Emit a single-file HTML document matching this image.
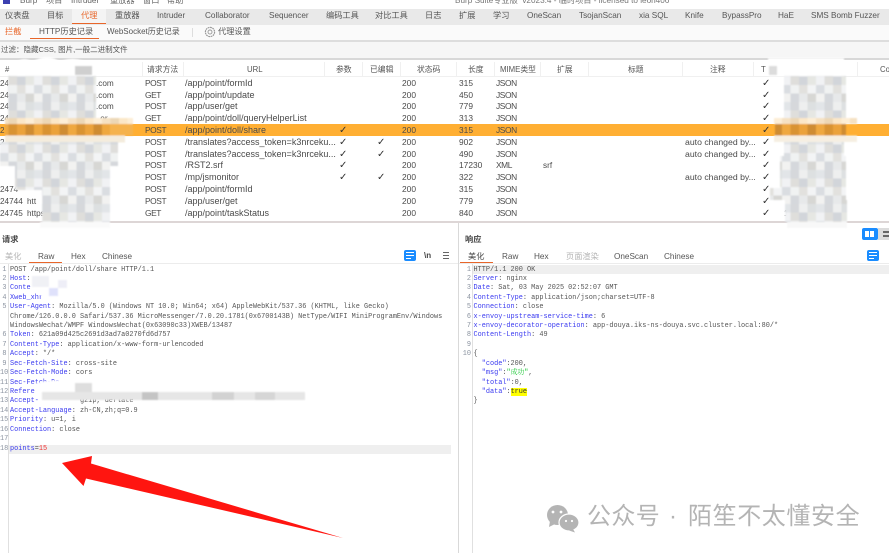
<!DOCTYPE html>
<html lang="zh-CN"><head><meta charset="utf-8"><title>Burp Suite</title>
<style>
html,body{margin:0;padding:0;background:#fff}
#s{position:relative;width:889px;height:553px;overflow:hidden;background:#fff}
#w{position:absolute;left:0;top:0;width:889px;height:553px;filter:blur(.32px);font:8px "Liberation Sans","Noto Sans CJK SC",sans-serif;color:#444}
#w div,#w span,#w b{position:absolute;white-space:pre}
.tb{top:10px;line-height:12px;font-size:8.2px;color:#555}
.st{top:26px;line-height:12px;font-size:8.2px;color:#555}
.h{top:63.5px;line-height:12px;font-size:7.8px;color:#555}
.r{left:0;width:889px;height:13px;line-height:13px;font-size:8.2px;color:#4a4a4a}
.m{left:145px;font-size:8.4px;letter-spacing:-.4px}.u{left:185px;font-size:9px}.s{left:402px;font-size:8.4px}.l{left:459px;font-size:8.4px}.t{left:496px;font-size:8.4px;letter-spacing:-.4px}.x{left:543px}.c{left:685px;font-size:8.7px}
.k{font:10px/13px "DejaVu Sans",sans-serif;color:#333}.p{left:339px}.e{left:377px}.v{left:762px}
.sep{top:62px;width:1px;height:14px;background:#f0f0f0}
.code{font:6.87px/9.42px "Liberation Mono","Noto Serif CJK SC",monospace;color:#555}
#w .code i{font-style:normal;color:#3b3bf0}
#w .code u{text-decoration:none;color:#f03030}
.ln{color:#8b93a0;text-align:right}
.pt{top:251px;line-height:12px;font-size:8.2px;color:#555}
.gr{color:#b5b5b5}
</style></head><body><div id="s"><div id="w">
<!-- title -->
<div style="left:3px;top:0;width:7px;height:4px;background:#3b3fb0"></div>
<div style="left:20px;top:-5px;line-height:12px;font-size:8.2px;color:#666">Burp</div>
<div style="left:46px;top:-5px;line-height:12px;font-size:8.2px;color:#666">项目</div>
<div style="left:71px;top:-5px;line-height:12px;font-size:8.2px;color:#666">Intruder</div>
<div style="left:110px;top:-5px;line-height:12px;font-size:8.2px;color:#666">重放器</div>
<div style="left:143px;top:-5px;line-height:12px;font-size:8.2px;color:#666">窗口</div>
<div style="left:167px;top:-5px;line-height:12px;font-size:8.2px;color:#666">帮助</div>
<div style="left:455px;top:-5px;line-height:12px;font-size:8.2px;color:#777">Burp Suite专业版  v2023.4 - 临时项目 - licensed to leon406</div>
<!-- tab bar -->
<div style="left:0;top:9px;width:889px;height:16px;background:#e9e9e9"></div>
<div style="left:72px;top:9px;width:34px;height:15px;background:#f4f4f4"></div>
<div style="left:72px;top:23px;width:34px;height:1.3px;background:#e8662a"></div>
<div class="tb" style="left:5px">仪表盘</div><div class="tb" style="left:47px">目标</div><div class="tb" style="left:81px;color:#e8662a">代理</div>
<div class="tb" style="left:115px">重放器</div><div class="tb" style="left:157px">Intruder</div><div class="tb" style="left:205px">Collaborator</div>
<div class="tb" style="left:269px">Sequencer</div><div class="tb" style="left:326px">编码工具</div><div class="tb" style="left:375px">对比工具</div>
<div class="tb" style="left:425px">日志</div><div class="tb" style="left:459px">扩展</div><div class="tb" style="left:493px">学习</div>
<div class="tb" style="left:527px">OneScan</div><div class="tb" style="left:579px">TsojanScan</div><div class="tb" style="left:639px">xia SQL</div>
<div class="tb" style="left:685px">Knife</div><div class="tb" style="left:722px">BypassPro</div><div class="tb" style="left:778px">HaE</div><div class="tb" style="left:811px">SMS Bomb Fuzzer</div>
<!-- sub tabs -->
<div style="left:0;top:25px;width:889px;height:15px;background:#fafafa"></div>
<div class="st" style="left:5px;color:#e8662a">拦截</div><div class="st" style="left:39px">HTTP历史记录</div><div class="st" style="left:107px;font-size:8px">WebSocket历史记录</div>
<div style="left:30px;top:38px;width:69px;height:1.3px;background:#e8662a"></div>
<div style="left:192px;top:28px;width:1px;height:9px;background:#ddd"></div>
<svg style="position:absolute;left:204px;top:26px" width="12" height="12" viewBox="0 0 12 12"><circle cx="6" cy="6" r="4.6" fill="none" stroke="#999" stroke-width="1.2" stroke-dasharray="1.8 .6"/><circle cx="6" cy="6" r="2" fill="none" stroke="#999" stroke-width=".9"/></svg>
<div class="st" style="left:218px">代理设置</div>
<!-- filter -->
<div style="left:0;top:40px;width:889px;height:2px;background:#ddd"></div>
<div style="left:0;top:42px;width:889px;height:16px;background:#f6f6f6"></div>
<div style="left:0;top:58px;width:889px;height:1.5px;background:#d8d8d8"></div>
<div style="left:1px;top:44px;line-height:12px;font-size:7.5px;color:#555">过滤：隐藏CSS, 图片,一般二进制文件</div>
<!-- header -->
<div style="left:0;top:76px;width:889px;height:1px;background:#f0f0f0"></div>
<div class="sep" style="left:142px"></div><div class="sep" style="left:183px"></div><div class="sep" style="left:324px"></div><div class="sep" style="left:362px"></div><div class="sep" style="left:400px"></div><div class="sep" style="left:456px"></div><div class="sep" style="left:494px"></div><div class="sep" style="left:540px"></div><div class="sep" style="left:588px"></div><div class="sep" style="left:682px"></div><div class="sep" style="left:753px"></div><div class="sep" style="left:857px"></div>
<div class="h" style="left:5px">#</div><div class="h" style="left:147px">请求方法</div><div class="h" style="left:247px">URL</div><div class="h" style="left:336px">参数</div><div class="h" style="left:370px">已编辑</div><div class="h" style="left:417px">状态码</div><div class="h" style="left:468px">长度</div><div class="h" style="left:500px">MIME类型</div><div class="h" style="left:557px">扩展</div><div class="h" style="left:628px">标题</div><div class="h" style="left:710px">注释</div><div class="h" style="left:761px">T</div><div class="h" style="left:880px">Co</div>
<!-- rows -->
<div class="r" style="top:77px"><span style="left:0">247</span><span style="left:96px">.com</span><span class="m">POST</span><span class="u">/app/point/formId</span><span class="s">200</span><span class="l">315</span><span class="t">JSON</span><span class="k v">✓</span></div>
<div class="r" style="top:88.5px"><span style="left:0">24</span><span style="left:96px">.com</span><span class="m">GET</span><span class="u">/app/point/update</span><span class="s">200</span><span class="l">450</span><span class="t">JSON</span><span class="k v">✓</span></div>
<div class="r" style="top:100.3px"><span style="left:0">24</span><span style="left:96px">.com</span><span class="m">POST</span><span class="u">/app/user/get</span><span class="s">200</span><span class="l">779</span><span class="t">JSON</span><span class="k v">✓</span></div>
<div class="r" style="top:112.1px"><span style="left:0">24</span><span style="left:98px">.or</span><span class="m">GET</span><span class="u">/app/point/doll/queryHelperList</span><span class="s">200</span><span class="l">313</span><span class="t">JSON</span><span class="k v">✓</span></div>
<div style="left:0;top:124px;width:889px;height:11.5px;background:#ffaf33"></div>
<div class="r" style="top:123.9px"><span style="left:0">2</span><span class="m">POST</span><span class="u">/app/point/doll/share</span><span class="k p">✓</span><span class="s">200</span><span class="l">315</span><span class="t">JSON</span><span class="k v">✓</span></div>
<div class="r" style="top:135.7px"><span style="left:0">2</span><span class="m">POST</span><span class="u">/translates?access_token=k3nrceku...</span><span class="k p">✓</span><span class="k e">✓</span><span class="s">200</span><span class="l">902</span><span class="t">JSON</span><span class="c">auto changed by...</span><span class="k v">✓</span></div>
<div class="r" style="top:147.5px"><span class="m">POST</span><span class="u">/translates?access_token=k3nrceku...</span><span class="k p">✓</span><span class="k e">✓</span><span class="s">200</span><span class="l">490</span><span class="t">JSON</span><span class="c">auto changed by...</span><span class="k v">✓</span></div>
<div class="r" style="top:159.3px"><span class="m">POST</span><span class="u">/RST2.srf</span><span class="k p">✓</span><span class="s">200</span><span class="l">17230</span><span class="t">XML</span><span class="x">srf</span><span class="k v">✓</span></div>
<div class="r" style="top:171.1px"><span class="m">POST</span><span class="u">/mp/jsmonitor</span><span class="k p">✓</span><span class="k e">✓</span><span class="s">200</span><span class="l">322</span><span class="t">JSON</span><span class="c">auto changed by...</span><span class="k v">✓</span></div>
<div class="r" style="top:182.9px"><span style="left:0">2474</span><span class="m">POST</span><span class="u">/app/point/formId</span><span class="s">200</span><span class="l">315</span><span class="t">JSON</span><span class="k v">✓</span></div>
<div class="r" style="top:194.7px"><span style="left:0">24744</span><span style="left:27px">htt</span><span class="m">POST</span><span class="u">/app/user/get</span><span class="s">200</span><span class="l">779</span><span class="t">JSON</span><span class="k v">✓</span></div>
<div class="r" style="top:206.5px"><span style="left:0">24745</span><span style="left:27px">https</span><span class="m">GET</span><span class="u">/app/point/taskStatus</span><span class="s">200</span><span class="l">840</span><span class="t">JSON</span><span class="k v">✓</span><span style="left:784px">1</span></div>
<div style="left:0;top:221px;width:889px;height:2px;background:#ddd6d6"></div>
<!-- mosaics -->
<svg style="position:absolute;left:0;top:0" width="889" height="553">
<defs>
<pattern id="g" width="34" height="34" patternUnits="userSpaceOnUse"><rect width="34" height="34" fill="#e9ebed"/><rect width="8.5" height="8.5" fill="#e2e5e8"/><rect x="8.5" width="8.5" height="8.5" fill="#d6d8db"/><rect x="17" width="8.5" height="8.5" fill="#eeefef"/><rect x="25.5" width="8.5" height="8.5" fill="#dde0e1"/><rect y="8.5" width="8.5" height="8.5" fill="#f1f2f4"/><rect x="8.5" y="8.5" width="8.5" height="8.5" fill="#dfdedb"/><rect x="17" y="8.5" width="8.5" height="8.5" fill="#d2d5da"/><rect x="25.5" y="8.5" width="8.5" height="8.5" fill="#e6e7e3"/><rect y="17" width="8.5" height="8.5" fill="#dadde1"/><rect x="8.5" y="17" width="8.5" height="8.5" fill="#f0f2f2"/><rect x="17" y="17" width="8.5" height="8.5" fill="#e2e1de"/><rect x="25.5" y="17" width="8.5" height="8.5" fill="#f3f4f5"/><rect y="25.5" width="8.5" height="8.5" fill="#f2f2f1"/><rect x="8.5" y="25.5" width="8.5" height="8.5" fill="#d5d8dc"/><rect x="17" y="25.5" width="8.5" height="8.5" fill="#e7e9ea"/><rect x="25.5" y="25.5" width="8.5" height="8.5" fill="#d7d7d4"/></pattern>
<pattern id="o" width="34" height="12" patternUnits="userSpaceOnUse"><rect width="34" height="12" fill="#e8a03c"/><rect width="8.5" height="12" fill="#efa83f"/><rect x="8.5" width="8.5" height="12" fill="#d99332"/><rect x="17" width="8.5" height="12" fill="#eba23a"/><rect x="25.5" width="8.5" height="12" fill="#cf8c30"/></pattern>
<pattern id="p" width="34" height="7" patternUnits="userSpaceOnUse"><rect width="34" height="7" fill="#fbe7c8"/><rect width="8.5" height="7" fill="#f5e1c3"/><rect x="8.5" width="8.5" height="7" fill="#ecd7b6"/><rect x="25.5" width="8.5" height="7" fill="#fdeed6"/></pattern>
<filter id="b" x="-5%" y="-5%" width="110%" height="110%"><feGaussianBlur stdDeviation=".8"/></filter>
</defs>
<g filter="url(#b)">
<path d="M10 68Q22 54 32 62Q48 52 60 62Q76 54 92 66V76H92V118H8V76H10Z" fill="#fff"/>
<rect x="16" y="68" width="60" height="8" fill="#fff"/><rect x="75" y="66" width="17" height="9" fill="#cfcfcf"/>
<rect x="8" y="76" width="88" height="42" fill="url(#g)"/>
<rect x="5" y="118" width="128" height="6" fill="url(#p)"/>
<rect x="5" y="124" width="105" height="11.5" fill="url(#o)"/><rect x="110" y="124" width="23" height="11.5" fill="#f5b24e"/>
<rect x="5" y="135.5" width="120" height="7" fill="#f4ecdd"/>
<rect x="0" y="142" width="118" height="24" fill="url(#g)"/>
<rect x="15" y="166" width="95" height="24" fill="url(#g)"/>
<rect x="42" y="190" width="68" height="32" fill="url(#g)"/>
<rect x="40" y="222" width="70" height="6" fill="#fafafa"/>
<rect x="768" y="58" width="76" height="18" fill="#fff"/><rect x="769" y="66" width="8" height="9" fill="#dcdcdc"/>
<rect x="784" y="76" width="62" height="42" fill="url(#g)"/>
<rect x="774" y="118" width="83" height="6" fill="url(#p)"/>
<rect x="775" y="124" width="71" height="11.5" fill="url(#o)"/>
<rect x="774" y="135.5" width="83" height="6.5" fill="#f6efe2"/>
<rect x="784" y="142" width="60" height="14" fill="url(#g)"/>
<rect x="780" y="156" width="66" height="32" fill="url(#g)"/>
<rect x="770" y="188" width="76" height="12" fill="url(#g)"/>
<rect x="785" y="200" width="62" height="22" fill="url(#g)"/>
<rect x="787" y="222" width="60" height="6" fill="#f8f8f8"/>
</g></svg>
<!-- panes -->
<div style="left:458px;top:223px;width:1px;height:330px;background:#d9d9d9"></div>
<div style="left:2px;top:234px;line-height:12px;font-size:8.2px;font-weight:bold;color:#444">请求</div>
<div style="left:465px;top:234px;line-height:12px;font-size:8.2px;font-weight:bold;color:#444">响应</div>
<div style="left:862px;top:228px;width:16px;height:12px;border-radius:2px;background:#1a8cff"></div>
<div style="left:865px;top:231px;width:4px;height:6px;background:#fff"></div><div style="left:870px;top:231px;width:4px;height:6px;background:#fff"></div>
<div style="left:878px;top:228px;width:11px;height:12px;background:#dcdcdc"></div>
<div style="left:883px;top:231px;width:6px;height:2px;background:#666"></div><div style="left:883px;top:235px;width:6px;height:2px;background:#666"></div>
<div class="pt gr" style="left:5px">美化</div><div class="pt" style="left:38px">Raw</div><div class="pt" style="left:71px">Hex</div><div class="pt" style="left:102px">Chinese</div>
<div style="left:29px;top:262px;width:33px;height:1.3px;background:#e8662a"></div>
<div style="left:404px;top:250px;width:12px;height:11px;border-radius:2px;background:#1a8cff"></div>
<div style="left:406px;top:252px;width:8px;height:1px;background:#fff"></div><div style="left:406px;top:255px;width:8px;height:1px;background:#fff"></div><div style="left:406px;top:258px;width:5px;height:1px;background:#fff"></div>
<div style="left:424px;top:250px;line-height:12px;font-size:8px;font-weight:bold;color:#444">\n</div>
<div style="left:443px;top:252px;width:6px;height:1px;background:#666"></div><div style="left:443px;top:255px;width:6px;height:1px;background:#666"></div><div style="left:443px;top:258px;width:6px;height:1px;background:#666"></div>
<div class="pt" style="left:468px;color:#444">美化</div><div class="pt" style="left:502px">Raw</div><div class="pt" style="left:534px">Hex</div><div class="pt gr" style="left:566px">页面渲染</div><div class="pt" style="left:614px">OneScan</div><div class="pt" style="left:664px">Chinese</div>
<div style="left:460px;top:262px;width:33px;height:1.3px;background:#e8662a"></div>
<div style="left:867px;top:250px;width:12px;height:11px;border-radius:2px;background:#1a8cff"></div>
<div style="left:869px;top:252px;width:8px;height:1px;background:#fff"></div><div style="left:869px;top:255px;width:8px;height:1px;background:#fff"></div><div style="left:869px;top:258px;width:5px;height:1px;background:#fff"></div>
<div style="left:0;top:263px;width:458px;height:1px;background:#ececec"></div>
<div style="left:459px;top:263px;width:430px;height:1px;background:#ececec"></div>
<div style="left:8px;top:264px;width:1px;height:289px;background:#e0e0e0"></div>
<div style="left:472px;top:264px;width:1px;height:289px;background:#e0e0e0"></div>
<div style="left:9px;top:445px;width:442px;height:9.4px;background:#efefef"></div>
<div style="left:473px;top:265px;width:416px;height:9.4px;background:#efefef"></div>
<!-- request -->
<div class="code ln" style="left:0;top:265.5px;width:6.5px">1
2
3
4
5


6
7
8
9
10
11
12
13
14
15
16
17
18</div>
<div class="code" style="left:10px;top:265.5px">POST /app/point/doll/share HTTP/1.1
<i>Host</i>:
<i>Conte</i>
<i>Xweb_xhr</i>
<i>User-Agent</i>: Mozilla/5.0 (Windows NT 10.0; Win64; x64) AppleWebKit/537.36 (KHTML, like Gecko)
Chrome/126.0.0.0 Safari/537.36 MicroMessenger/7.0.20.1781(0x6700143B) NetType/WIFI MiniProgramEnv/Windows
WindowsWechat/WMPF WindowsWechat(0x63090c33)XWEB/13487
<i>Token</i>: 621a09d425c2691d3ad7a0270fd6d757
<i>Content-Type</i>: application/x-www-form-urlencoded
<i>Accept</i>: */*
<i>Sec-Fetch-Site</i>: cross-site
<i>Sec-Fetch-Mode</i>: cors
<i>Sec-Fetch-De</i>
<i>Refere</i>
<i>Accept-</i>          gzip, deflate
<i>Accept-Language</i>: zh-CN,zh;q=0.9
<i>Priority</i>: u=1, i
<i>Connection</i>: close

<i>points</i>=<u>15</u></div>
<!-- response -->
<div class="code ln" style="left:460px;top:265.5px;width:11px">1
2
3
4
5
6
7
8
9
10</div>
<div class="code" style="left:473.5px;top:265.5px">HTTP/1.1 200 OK
<i>Server</i>: nginx
<i>Date</i>: Sat, 03 May 2025 02:52:07 GMT
<i>Content-Type</i>: application/json;charset=UTF-8
<i>Connection</i>: close
<i>x-envoy-upstream-service-time</i>: 6
<i>x-envoy-decorator-operation</i>: app-douya.iks-ns-douya.svc.cluster.local:80/*
<i>Content-Length</i>: 49

{
  <i>"code"</i>:200,
  <i>"msg"</i>:<span style="position:static;color:#22c93a">"成功"</span>,
  <i>"total"</i>:0,
  <i>"data"</i>:<span style="position:static;background:#ffff00;color:#333">true</span>
}</div>
<!-- request mosaics -->
<svg style="position:absolute;left:0;top:0" width="889" height="553"><g filter="url(#b)">
<path d="M31 275Q60 273 100 275V285L72 297H42L31 284Z" fill="#fff"/>
<rect x="32" y="276" width="17" height="11" fill="#f0f1f5"/><rect x="49" y="288" width="9" height="8" fill="#dfe1fb"/><rect x="58" y="280" width="9" height="8" fill="#eeeef7"/>
<path d="M34 384Q50 378 90 381L305 386V400H45L36 396Z" fill="#fff"/>
<rect x="42" y="392" width="263" height="8" fill="#e6e6e6"/><rect x="75" y="383" width="17" height="9" fill="#dedede"/><rect x="142" y="392" width="16" height="8" fill="#c4c4c4"/><rect x="212" y="392" width="22" height="8" fill="#d2d2d2"/><rect x="255" y="392" width="20" height="8" fill="#d6d6d6"/>
</g></svg>
</div>
<!-- arrow -->
<svg style="position:absolute;left:0;top:0" width="889" height="553"><polygon points="62,463 92,456 91,463.5 343,538 86,478.5 83.5,486" fill="#ff1510"/>
<!-- wechat icon -->
<g fill="#b4b4b4"><ellipse cx="557.5" cy="515" rx="10.5" ry="10"/><path d="M550 521l-1 6 6-3z"/><ellipse cx="569" cy="522.5" rx="10" ry="8.5" stroke="#fff" stroke-width="1.2"/><path d="M573 529l2 3.5-6-2z"/></g>
<g fill="#fff"><circle cx="553" cy="512" r="1.4"/><circle cx="561" cy="512" r="1.4"/><circle cx="566" cy="521" r="1.1"/><circle cx="572" cy="521" r="1.1"/></g>
</svg>
<div style="position:absolute;left:587px;top:503px;font:24px/28px 'Liberation Sans','Noto Sans CJK SC',sans-serif;color:#b4b4b4;letter-spacing:.4px;white-space:pre">公众号</div>
<div style="position:absolute;left:669px;top:503px;font:24px/28px 'Liberation Sans','Noto Sans CJK SC',sans-serif;color:#b4b4b4">·</div>
<div style="position:absolute;left:688px;top:503px;font:24px/28px 'Liberation Sans','Noto Sans CJK SC',sans-serif;color:#b4b4b4;letter-spacing:.6px;white-space:pre">陌笙不太懂安全</div>
</div></body></html>
